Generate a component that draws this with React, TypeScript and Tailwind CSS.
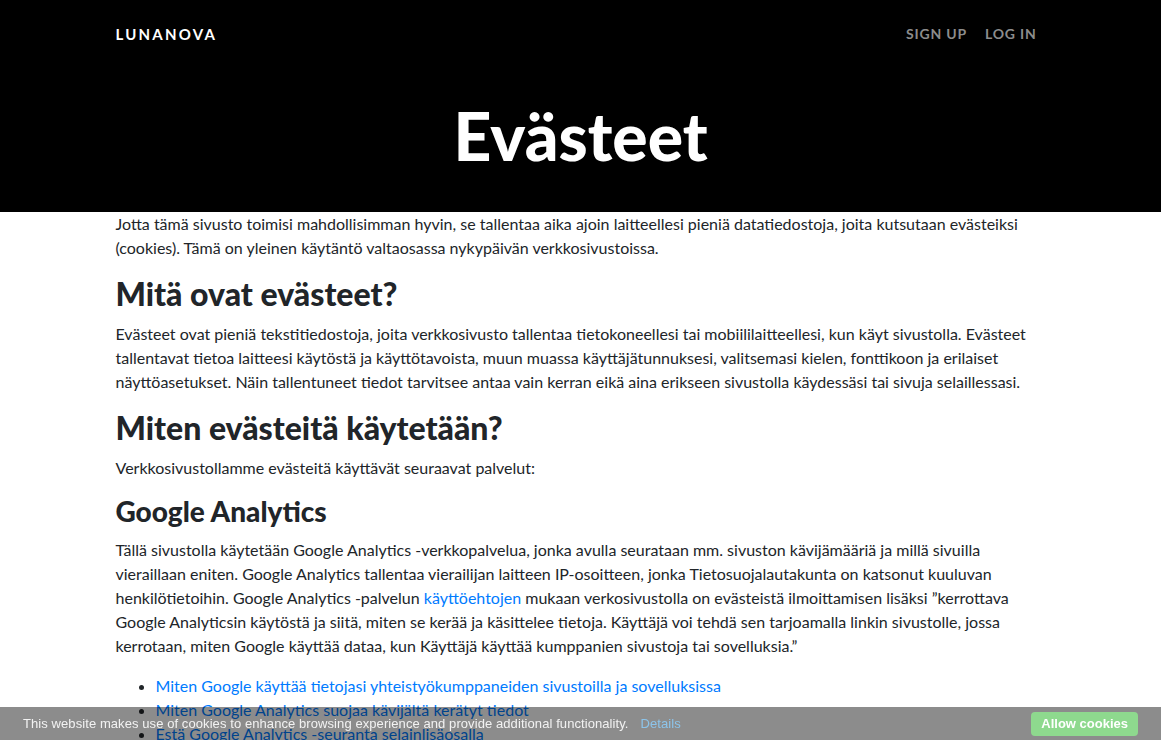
export default function App() {
  return (
    <div className="relative min-h-[740px] bg-white font-['Lato','Noto_Sans',sans-serif] text-[16px] leading-[24px] text-[#212529]">
      <header className="bg-black">
        <div className="mx-auto max-w-[960px] px-[15px]">
          <nav className="flex h-[67px] items-center justify-between">
            <a className="text-[15px] font-bold tracking-[2.2px] text-white">LUNANOVA</a>
            <div className="flex gap-[18px] pr-[9px] text-[14px] font-bold tracking-[0.8px] text-[#8c8c8c]">
              <a>SIGN UP</a>
              <a>LOG IN</a>
            </div>
          </nav>
          <h1 className="pt-[30px] pb-[37px] text-center text-[66px] leading-[78px] font-black text-white">Evästeet</h1>
        </div>
      </header>

      <main className="mx-auto max-w-[960px] px-[15px]">
        <p className="mb-4">
          Jotta tämä sivusto toimisi mahdollisimman hyvin, se tallentaa aika ajoin laitteellesi pieniä datatiedostoja, joita kutsutaan evästeiksi (cookies). Tämä on yleinen käytäntö valtaosassa nykypäivän verkkosivustoissa.
        </p>

        <h2 className="mb-[10px] text-[32px] leading-[36px] font-black">Mitä ovat evästeet?</h2>
        <p className="mb-4">
          Evästeet ovat pieniä tekstitiedostoja, joita verkkosivusto tallentaa tietokoneellesi tai mobiililaitteellesi, kun käyt sivustolla. Evästeet tallentavat tietoa laitteesi käytöstä ja käyttötavoista, muun muassa käyttäjätunnuksesi, valitsemasi kielen, fonttikoon ja erilaiset näyttöasetukset. Näin tallentuneet tiedot tarvitsee antaa vain kerran eikä aina erikseen sivustolla käydessäsi tai sivuja selaillessasi.
        </p>

        <h2 className="mb-[10px] text-[32px] leading-[36px] font-black">Miten evästeitä käytetään?</h2>
        <p className="mb-4">Verkkosivustollamme evästeitä käyttävät seuraavat palvelut:</p>

        <h3 className="mb-[12px] text-[28px] leading-[30px] font-black">Google Analytics</h3>
        <p className="mb-4">
          Tällä sivustolla käytetään Google Analytics -verkkopalvelua, jonka avulla seurataan mm. sivuston kävijämääriä ja millä sivuilla vieraillaan eniten. Google Analytics tallentaa vierailijan laitteen IP-osoitteen, jonka Tietosuojalautakunta on katsonut kuuluvan henkilötietoihin. Google Analytics -palvelun{" "}
          <a className="text-[#007bff]">käyttöehtojen</a> mukaan verkosivustolla on evästeistä ilmoittamisen lisäksi ”kerrottava Google Analyticsin käytöstä ja siitä, miten se kerää ja käsittelee tietoja. Käyttäjä voi tehdä sen tarjoamalla linkin sivustolle, jossa kerrotaan, miten Google käyttää dataa, kun Käyttäjä käyttää kumppanien sivustoja tai sovelluksia.”
        </p>

        <ul className="mb-4 list-disc pl-10">
          <li><a className="text-[#007bff]">Miten Google käyttää tietojasi yhteistyökumppaneiden sivustoilla ja sovelluksissa</a></li>
          <li><a className="text-[#007bff]">Miten Google Analytics suojaa kävijältä kerätyt tiedot</a></li>
          <li><a className="text-[#007bff]">Estä Google Analytics -seuranta selainlisäosalla</a></li>
        </ul>
      </main>

      {/* cookie consent bar, fixed over the page */}
      <div className="fixed bottom-0 left-0 right-0 flex h-[33px] items-center justify-between bg-black/45 px-[23px] font-['Liberation_Sans',Arial,sans-serif] text-[13px] tracking-[0.08px] text-[#f2f2f2]">
        <div>
          This website makes use of cookies to enhance browsing experience and provide additional functionality.
          <a className="ml-[12px] text-[#8cc4ea]">Details</a>
        </div>
        <button className="h-[24px] rounded-[4px] bg-[#8ed98e] px-[10px] text-[13px] font-bold tracking-normal text-white">Allow cookies</button>
      </div>
    </div>
  );
}
